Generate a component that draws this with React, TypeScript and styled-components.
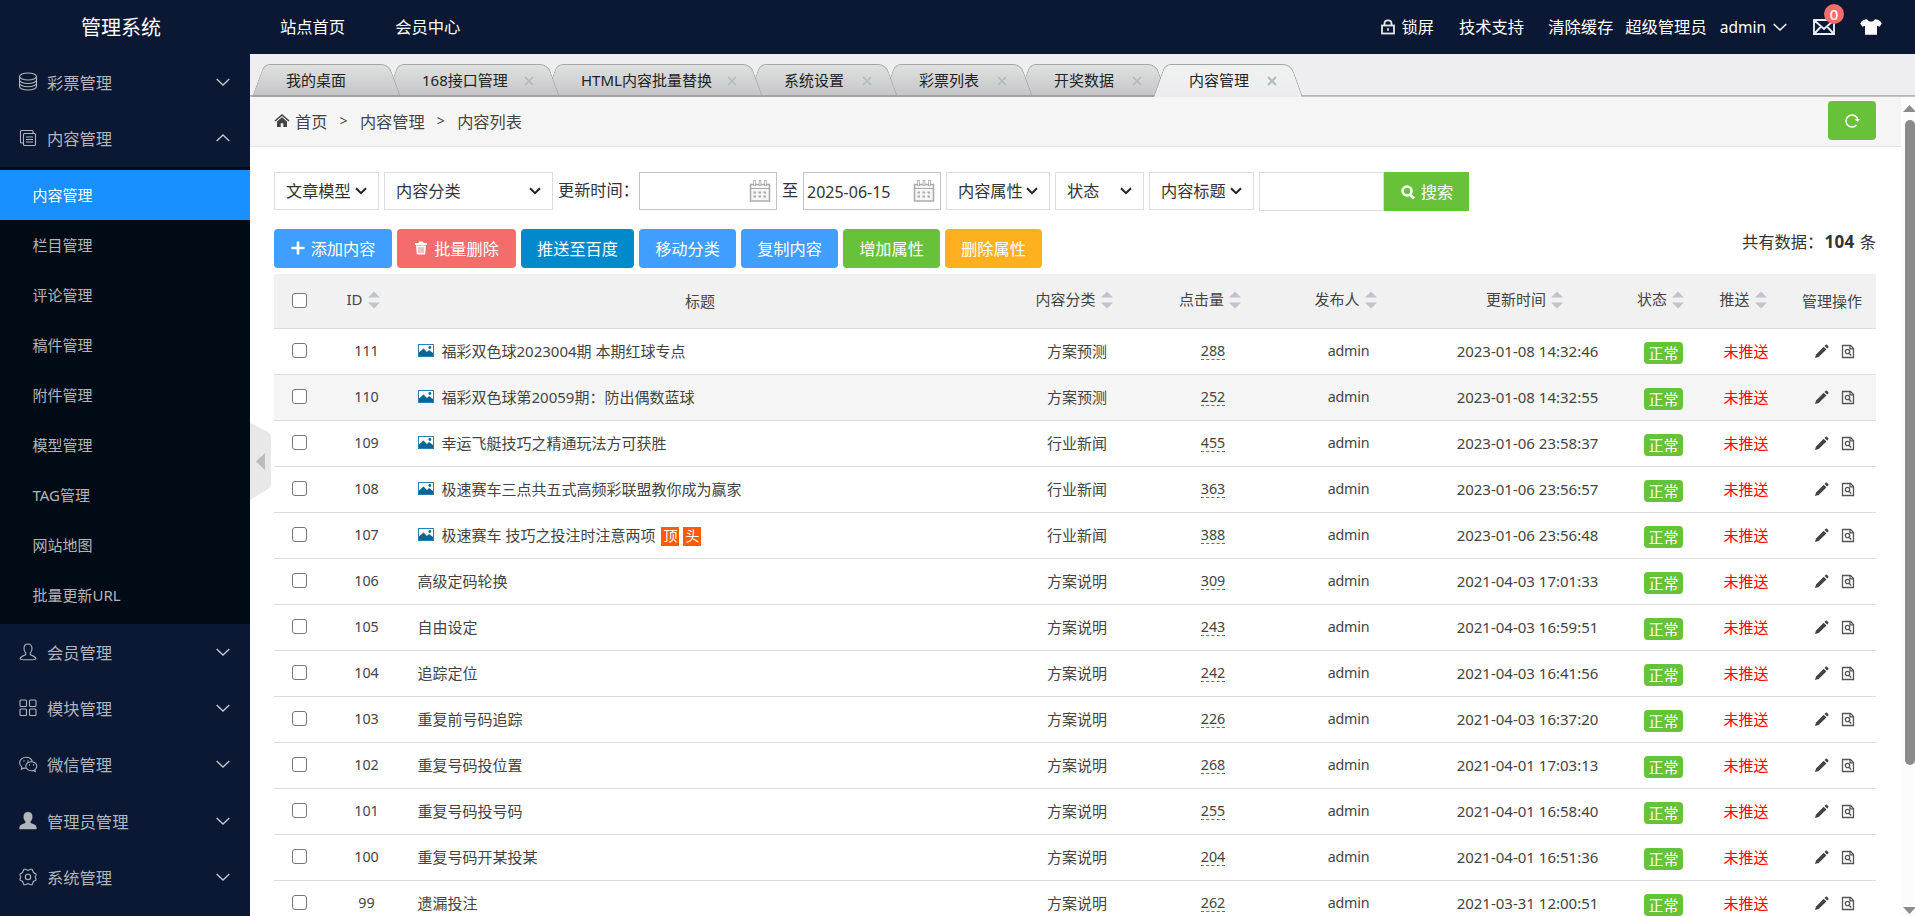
import React from 'react';
import styled, { createGlobalStyle, css } from 'styled-components';

const GlobalStyle = createGlobalStyle`
  * { box-sizing: border-box; }
  html, body { margin: 0; padding: 0; height: 100%; overflow: hidden; }
  body {
    font-family: 'Noto Sans', 'Noto Sans CJK SC', sans-serif;
    font-size: 15px;
    color: #444;
    background: #fff;
  }
`;

const Page = styled.div`
  height: 916px;
  display: flex;
  flex-direction: column;
  overflow: hidden;
`;

/* ---------- header ---------- */
const Header = styled.header`
  height: 54px;
  flex: none;
  display: flex;
  align-items: center;
  background: #0a1833;
  color: #fff;
  font-size: 16.300px;
  line-height: 54px;
  white-space: nowrap;
`;
const Brand = styled.div`
  width: 280px;
  padding-left: 81px;
  padding-top: 1px;
  font-size: 20px;
`;
const TopNav = styled.nav`
  display: flex;
  gap: 50px;
`;
const TopTools = styled.div`
  margin-left: auto;
  display: flex;
  align-items: center;
  padding-right: 33px;
`;
const Tool = styled.div<{ $gap: number }>`
  display: flex;
  align-items: center;
  margin-left: ${(p) => p.$gap}px;
  position: relative;
  svg { display: block; }
`;
const LockText = styled.span`
  margin-left: 6px;
`;
const UserName = styled.span`
  font-size: 15.500px;
`;
const Badge = styled.span`
  position: absolute;
  left: 11px;
  top: -15px;
  width: 20px;
  height: 20px;
  border-radius: 10px;
  background: #f56c6c;
  font-size: 15px;
  font-weight: 500;
  line-height: 20px;
  text-align: center;
`;

/* ---------- side menu ---------- */
const Body = styled.div`
  flex: 1;
  display: flex;
  min-height: 0;
`;
const Side = styled.aside`
  width: 250px;
  flex: none;
  background: #0a1833;
  color: #b2b5bb;
`;
const Group = styled.div`
  height: 56.33px;
  display: flex;
  align-items: center;
  padding: 0 20px 1px 17px;
  font-size: 16.300px;
  svg { display: block; flex: none; }
`;
const GroupName = styled.span`
  flex: 1;
  margin-left: 8px;
`;
const SubMenu = styled.div`
  background: #000b15;
  padding: 3.3px 0 4px;
`;
const SubItem = styled.div<{ $active?: boolean }>`
  height: 50px;
  line-height: 50px;
  padding-left: 32.500px;
  color: ${(p) => (p.$active ? '#fff' : '#b2b5b9')};
  background: ${(p) => (p.$active ? '#1890ff' : 'transparent')};
`;

/* ---------- main ---------- */
const Main = styled.main`
  flex: 1;
  min-width: 0;
  display: flex;
  flex-direction: column;
  position: relative;
`;
const TabBar = styled.div`
  height: 43px;
  flex: none;
  padding: 10px 0 0 2px;
  display: flex;
  background: #eeeef0;
  box-shadow: inset 0 -1px 0 #c4c4c6, inset 0 -2px 0 #b3b5b6;
`;
const tabFace = css<{ $active?: boolean }>`
  content: '';
  position: absolute;
  top: 0;
  bottom: 0;
  border: 1px solid #a6a6a6;
  background: ${(p) =>
    p.$active ? 'linear-gradient(#f0f2f1, #ececee)' : 'linear-gradient(#dfe1e0, #c6c6c8)'};
  z-index: -1;
`;
const Tab = styled.div<{ $width: number; $order: number; $active?: boolean }>`
  position: relative;
  z-index: ${(p) => p.$order};
  isolation: isolate;
  flex: none;
  width: ${(p) => p.$width}px;
  height: 33px;
  padding: 0 23px 2px 36px;
  &:first-child { padding-left: 34px; }
  display: flex;
  align-items: center;
  justify-content: space-between;
  color: #222;
  white-space: nowrap;
  & + & { margin-left: -15px; }
  &::before {
    ${tabFace}
    left: 6px;
    width: calc(60% - 6px);
    border-right: 0;
    border-top-left-radius: 6px;
    transform: skewX(-20deg);
    border-bottom: ${(p) => (p.$active ? 0 : '2px solid #a3a3a4')};
  }
  &::after {
    ${tabFace}
    right: 6px;
    width: calc(60% - 6px);
    border-left: 0;
    border-top-right-radius: 8px;
    transform: skewX(20deg);
    border-bottom: ${(p) => (p.$active ? 0 : '2px solid #a3a3a4')};
  }
`;
const TabClose = styled.svg`
  display: block;
  margin-top: 2px;
`;
const Content = styled.div`
  flex: 1;
  min-height: 0;
  display: flex;
`;
const Frame = styled.div`
  flex: 1;
  min-width: 0;
  overflow: hidden;
`;
const Crumbs = styled.div`
  height: 50px;
  display: flex;
  align-items: center;
  padding: 0 25px 2px 24px;
  background: #f5f5f5;
  border-bottom: 1px solid #e4e4e4;
  font-size: 16.200px;
  svg { display: block; }
`;
const CrumbHome = styled.span`
  margin-left: 5px;
`;
const CrumbSep = styled.span`
  width: 32.500px;
  text-align: center;
  font-size: 14px;
`;
const Refresh = styled.button`
  margin-left: auto;
  width: 48px;
  height: 39px;
  border: 0;
  border-radius: 4px;
  background: #67c23a;
  display: flex;
  align-items: center;
  justify-content: center;
`;
const ScrollBar = styled.div`
  width: 14px;
  flex: none;
  background: #fcfcfc;
  display: flex;
  flex-direction: column;
  align-items: flex-end;
  padding: 8px 0 2px;
  overflow: hidden;
`;
const ScrollThumb = styled.div`
  width: 10px;
  height: 645px;
  margin: 8px 0 auto;
  border-radius: 5px;
  background: #8b8b8b;
`;
const Handle = styled.svg`
  position: absolute;
  left: 0;
  top: 369px;
`;

const Filters = styled.form`
  display: flex;
  align-items: flex-start;
  height: 57px;
  margin: 25px 0 0 24px;
  font-size: 16.200px;
  line-height: 37px;
  white-space: nowrap;
`;
const Field = styled.div<{ $width: number; $gap?: number; $strong?: boolean; $tall?: boolean }>`
  width: ${(p) => p.$width}px;
  height: ${(p) => (p.$tall ? 39 : 38)}px;
  margin-right: ${(p) => p.$gap ?? 5}px;
  border: 1px solid ${(p) => (p.$strong ? '#c2c2c2' : '#ddd')};
  padding: 0 ${(p) => (p.$strong ? '5px 0 3px' : '11px')};
  display: flex;
  align-items: center;
  justify-content: space-between;
  color: #333;
  svg { flex: none; }
`;
const DateText = styled.span`
  padding-top: 2px;
  font-size: 16px;
`;
const FilterText = styled.span<{ $width: number }>`
  width: ${(p) => p.$width}px;
  flex: none;
  color: #333;
`;
const SearchButton = styled.button`
  width: 85px;
  height: 39px;
  border: 0;
  background: #67c23a;
  color: #fff;
  font: inherit;
  display: flex;
  align-items: center;
  justify-content: center;
  gap: 6px;
  padding: 1px 0 0 1px;
`;
const Actions = styled.div`
  display: flex;
  gap: 5px;
  height: 45px;
  margin: 0 25px 0 24px;
`;
const Action = styled.button<{ $color: string; $width: number }>`
  width: ${(p) => p.$width}px;
  height: 39px;
  padding: 0 0 2px;
  border: 0;
  border-radius: 4px;
  background: ${(p) => p.$color};
  color: #fff;
  font: inherit;
  font-size: 16.200px;
  display: flex;
  align-items: center;
  justify-content: center;
  gap: 6px;
`;
const Total = styled.div`
  margin-left: auto;
  font-size: 16.300px;
  line-height: 26px;
  color: #333;
  b {
    margin: 0 1px;
    font-size: 17px;
    letter-spacing: 0.300px;
  }
`;

/* ---------- table ---------- */
const columns = '51px 82px 586px 168px 104px 167px 191px 81px 84px 88px';
const Table = styled.div`
  width: 1602px;
  margin-left: 24px;
`;
const HeadRow = styled.div`
  display: grid;
  grid-template-columns: ${columns};
  height: 55px;
  align-items: center;
  justify-items: center;
  background: #f1f1f1;
  border-bottom: 1px solid #ddd;
  padding-bottom: 1px;
`;
const HeadCell = styled.div<{ $sort?: boolean }>`
  display: flex;
  align-items: center;
  gap: 5px;
  ${(p) => (p.$sort ? 'padding-right: 6px; padding-bottom: 4px;' : '')}
  svg { margin-top: 3px; }
`;
const Row = styled.div<{ $tint?: boolean }>`
  display: grid;
  grid-template-columns: ${columns};
  height: 46px;
  padding-bottom: 2px;
  align-items: center;
  justify-items: center;
  border-bottom: 1px solid #ddd;
  background: ${(p) => (p.$tint ? '#f5f5f5' : '#fff')};
  white-space: nowrap;
`;
const Check = styled.input.attrs({ type: 'checkbox' })`
  appearance: none;
  width: 15px;
  height: 15px;
  margin: 0 0 1px;
  border: 1px solid #767676;
  border-radius: 3px;
  background: #fff;
`;
const Num = styled.span`
  font-size: 14.3px;
  padding-left: 1px;
`;
const Title = styled.div`
  justify-self: start;
  padding-left: 10.500px;
  display: flex;
  align-items: center;
`;
const Thumb = styled.svg`
  margin-right: 8px;
`;
const Mark = styled.span`
  height: 19px;
  width: 18px;
  margin: 3px 0 0 4px;
  background: #ff5b00;
  color: #fff;
  font-size: 14px;
  line-height: 18px;
  text-align: center;
  &:first-of-type { margin-left: 6px; }
`;
const Hits = styled.span`
  font-size: 14.3px;
  line-height: 17px;
  border-bottom: 1px dashed #08c;
`;
const Author = styled.span`
  font-size: 14.300px;
  letter-spacing: -0.200px;
`;
const Status = styled.span`
  width: 39px;
  height: 22px;
  margin-top: 5px;
  border-radius: 4px;
  background: #67c23a;
  color: #fff;
  line-height: 22px;
  text-align: center;
`;
const Push = styled.span`
  color: #f00;
`;
const Ops = styled.div`
  display: flex;
  gap: 12px;
  padding-left: 5px;
  margin-top: 2px;
`;

/* ---------- icons ---------- */
const Chevron = ({ up = false, color = '#c3c6cc' }) => (
  <svg width="14" height="8" viewBox="0 0 14 8" fill="none" stroke={color} strokeWidth="1.4">
    <path d={up ? 'M.7 7 7 1l6.300 6' : 'M.7 1 7 7l6.300-6'} />
  </svg>
);
const SelectArrow = () => (
  <svg width="12" height="8" viewBox="0 0 12 8" fill="none" stroke="#222" strokeWidth="2">
    <path d="M1 1.200 6 6.200l5-5" />
  </svg>
);
const menuIcons: Record<string, React.ReactNode> = {
  db: (
    <>
      <ellipse cx="11" cy="5.500" rx="8.500" ry="3.500" />
      <path d="M2.500 5.500v10c0 2 3.800 3.500 8.500 3.500s8.500-1.500 8.500-3.500v-10M2.500 9c0 2 3.800 3.500 8.500 3.500S19.500 11 19.500 9M2.500 12.300c0 2 3.800 3.500 8.500 3.500s8.500-1.500 8.500-3.500" />
    </>
  ),
  docs: (
    <>
      <path d="M6 16H4.500c-.6 0-1-.4-1-1V4.500c0-.6.4-1 1-1H15c.6 0 1 .4 1 1V6" />
      <rect x="6.500" y="6.500" width="12" height="12" rx="1" />
      <path d="M9 10h7M9 12.500h7M9 15h7" />
    </>
  ),
  user: (
    <path d="M11 3c-2.600 0-4 1.900-4 4.400 0 1.700.6 3.400 1.700 4.400v1.700c-.4 1.200-5.200 1.300-5.700 4.500 0 .7 2 .8 8 .8s8-.1 8-.8c-.5-3.200-5.300-3.300-5.700-4.500v-1.700c1.100-1 1.700-2.700 1.700-4.400C15 4.900 13.600 3 11 3z" />
  ),
  grid: (
    <>
      <rect x="3" y="3" width="6.500" height="6.500" rx="1" />
      <rect x="12.500" y="3" width="6.500" height="6.500" rx="1" />
      <rect x="3" y="12" width="6.500" height="6.500" rx="1" />
      <rect x="12.500" y="12" width="6.500" height="6.500" rx="1" />
    </>
  ),
  wechat: (
    <>
      <path d="M9 15.300c-.8 0-1.400-.1-2-.3l-2.600 1.300.6-2.200C3.500 13 2.600 11.500 2.600 9.800c0-3.100 2.900-5.500 6.400-5.500 3 0 5.600 1.800 6.300 4.200" />
      <path d="M19.800 13.200c0-2.500-2.500-4.500-5.500-4.500s-5.500 2-5.500 4.500 2.500 4.500 5.500 4.500c.7 0 1.300-.1 1.900-.3l2 1-.4-1.700c1.200-.8 2-2 2-3.500z" />
      <path d="M6.500 8h1M10.500 8h1M12 12h1M16 12h1" strokeWidth="1.600" />
    </>
  ),
  admin: (
    <path
      fill="#b2b5bb"
      stroke="none"
      d="M11 2C8 2 6.500 4 6.500 6.800c0 1.900.8 3.600 1.900 4.600v1.400c-.4 1.100-6.100 1-6.100 5.400 0 .6.400 1 1.200 1h15c.8 0 1.200-.4 1.200-1 0-4.400-5.700-4.300-6.100-5.400v-1.400c1.100-1 1.900-2.700 1.900-4.600C15.500 4 14 2 11 2z"
    />
  ),
  gear: (
    <>
      <path d="M7 3.200h1.500L11 4.500l2.500-1.300H15l1.500 3.300 2.500 1.500v1l-.8 2 .8 2v1l-2.500 1.500L15 18.800h-1.500L11 17.500l-2.500 1.300H7L5.500 15.500 3 14v-1l.8-2L3 9V8l2.500-1.500z" />
      <circle cx="11" cy="11" r="2.700" />
    </>
  ),
};
const MenuIcon = ({ name }: { name: string }) => (
  <svg width="22" height="22" viewBox="0 0 22 22" fill="none" stroke="#b2b5bb" strokeWidth="1.100">
    {menuIcons[name]}
  </svg>
);
const Calendar = () => (
  <svg width="22" height="24" viewBox="0 0 22 24" fill="none" stroke="#aaa">
    <rect x="1.500" y="5.500" width="19" height="16.500" fill="#f6f6f6" strokeWidth="1.500" />
    <path d="M1 9.500h20" />
    <path d="M5.500 1v6M11 1v6M16.500 1v6" strokeWidth="2.600" />
    <path d="M5.500 1.800v4.500M11 1.800v4.500M16.500 1.800v4.500" stroke="#fff" />
    <path d="M4.500 13.500h13M4.500 17.500h13" strokeWidth="2" strokeDasharray="2.500 2.500" />
  </svg>
);
const SortArrows = () => (
  <svg width="12" height="18" viewBox="0 0 12 18" fill="#c0c4cc">
    <path d="M6 0.500l6 6H0zM6 17.500l6-6H0z" />
  </svg>
);
const ImageIcon = () => (
  <Thumb width="16" height="13" viewBox="0 0 16 13">
    <rect x=".5" y=".5" width="15" height="12" fill="#fff" stroke="#2a7fae" />
    <path d="M1 12V8.500l4.500-4 3.500 3.500 2-2L15 9v3z" fill="#0a6496" />
    <circle cx="11.800" cy="3.500" r="1.400" fill="#0a6496" />
  </Thumb>
);
const Pencil = () => (
  <svg width="15" height="15" viewBox="0 0 15 15" fill="#444">
    <path d="M1 14l1-3.600 7.700-7.700 2.700 2.700L4.700 13zM10.500 1.900l1-1c.5-.5 1.100-.4 1.600 0l1.100 1.100c.5.500.5 1.100 0 1.600l-1 1z" />
  </svg>
);
const DocSearch = () => (
  <svg width="14" height="15" viewBox="0 0 14 15" fill="none" stroke="#555" strokeWidth="1.300">
    <path d="M1.500 1.500h8l3 3v9h-11z" />
    <path d="M9 1.500v3.300h3.500" />
    <circle cx="6.500" cy="7.500" r="2.200" />
    <path d="M8 9.200l2.200 2.300" />
  </svg>
);

/* ---------- data ---------- */
const subItems = ['内容管理', '栏目管理', '评论管理', '稿件管理', '附件管理', '模型管理', 'TAG管理', '网站地图', '批量更新URL'];
const lowerGroups = [
  ['user', '会员管理'],
  ['grid', '模块管理'],
  ['wechat', '微信管理'],
  ['admin', '管理员管理'],
  ['gear', '系统管理'],
];
const tabs: [string, number][] = [
  ['我的桌面', 149],
  ['168接口管理', 174],
  ['HTML内容批量替换', 218],
  ['系统设置', 150],
  ['彩票列表', 150],
  ['开奖数据', 150],
  ['内容管理', 150],
];
type Item = { id: number; title: string; kind: string; hits: number; time: string; image?: boolean; marks?: string[] };
const items: Item[] = [
  { id: 111, title: '福彩双色球2023004期 本期红球专点', kind: '方案预测', hits: 288, time: '2023-01-08 14:32:46', image: true },
  { id: 110, title: '福彩双色球第20059期：防出偶数蓝球', kind: '方案预测', hits: 252, time: '2023-01-08 14:32:55', image: true },
  { id: 109, title: '幸运飞艇技巧之精通玩法方可获胜', kind: '行业新闻', hits: 455, time: '2023-01-06 23:58:37', image: true },
  { id: 108, title: '极速赛车三点共五式高频彩联盟教你成为赢家', kind: '行业新闻', hits: 363, time: '2023-01-06 23:56:57', image: true },
  { id: 107, title: '极速赛车 技巧之投注时注意两项', kind: '行业新闻', hits: 388, time: '2023-01-06 23:56:48', image: true, marks: ['顶', '头'] },
  { id: 106, title: '高级定码轮换', kind: '方案说明', hits: 309, time: '2021-04-03 17:01:33' },
  { id: 105, title: '自由设定', kind: '方案说明', hits: 243, time: '2021-04-03 16:59:51' },
  { id: 104, title: '追踪定位', kind: '方案说明', hits: 242, time: '2021-04-03 16:41:56' },
  { id: 103, title: '重复前号码追踪', kind: '方案说明', hits: 226, time: '2021-04-03 16:37:20' },
  { id: 102, title: '重复号码投位置', kind: '方案说明', hits: 268, time: '2021-04-01 17:03:13' },
  { id: 101, title: '重复号码投号码', kind: '方案说明', hits: 255, time: '2021-04-01 16:58:40' },
  { id: 100, title: '重复号码开某投某', kind: '方案说明', hits: 204, time: '2021-04-01 16:51:36' },
  { id: 99, title: '遗漏投注', kind: '方案说明', hits: 262, time: '2021-03-31 12:00:51' },
];
const heads: [string, boolean][] = [
  ['ID', true],
  ['标题', false],
  ['内容分类', true],
  ['点击量', true],
  ['发布人', true],
  ['更新时间', true],
  ['状态', true],
  ['推送', true],
  ['管理操作', false],
];

const Select = ({ label, width }: { label: string; width: number }) => (
  <Field $width={width}>
    {label}
    <SelectArrow />
  </Field>
);

export default function App() {
  return (
    <Page lang="zh-CN">
      <GlobalStyle />
      <Header>
        <Brand>管理系统</Brand>
        <TopNav>
          <span>站点首页</span>
          <span>会员中心</span>
        </TopNav>
        <TopTools>
          <Tool $gap={0}>
            <svg width="14" height="16" viewBox="0 0 14 16" fill="none" stroke="#e6e8ec" strokeWidth="1.800">
              <rect x="1" y="6.500" width="12" height="8" />
              <path d="M3.500 6.500V4.600C3.500 2.700 5 1.300 7 1.300s3.500 1.400 3.500 3.300v1.900M7 9.300v2.400" />
            </svg>
            <LockText>锁屏</LockText>
          </Tool>
          <Tool $gap={25}>技术支持</Tool>
          <Tool $gap={24}>清除缓存</Tool>
          <Tool $gap={12}>超级管理员</Tool>
          <Tool $gap={13}>
            <UserName>admin</UserName>
          </Tool>
          <Tool $gap={7}>
            <Chevron color="#fff" />
          </Tool>
          <Tool $gap={26}>
            <svg width="22" height="16" viewBox="0 0 22 16" fill="none" stroke="#e8eaee" strokeWidth="1.900">
              <path d="M1 1h20v14H1zM1.500 1.500 11 10l9.500-8.500M1.500 14.500l6.500-7M20.500 14.500l-6.500-7" />
            </svg>
            <Badge>0</Badge>
          </Tool>
          <Tool $gap={25}>
            <svg width="22" height="16" viewBox="0 0 22 16" fill="#fff">
              <path d="M7 .3C8 2 9.300 2.600 11 2.600S14 2 15 .3c2.500.2 5.500 1.200 6.700 4.200l-2 3.200-2.700-1v9H5v-9l-2.700 1-2-3.200C1.500 1.500 4.500.5 7 .3z" />
            </svg>
          </Tool>
        </TopTools>
      </Header>
      <Body>
        <Side>
          <Group>
            <MenuIcon name="db" />
            <GroupName>彩票管理</GroupName>
            <Chevron />
          </Group>
          <Group>
            <MenuIcon name="docs" />
            <GroupName>内容管理</GroupName>
            <Chevron up />
          </Group>
          <SubMenu>
            {subItems.map((s, i) => (
              <SubItem key={s} $active={i === 0}>
                {s}
              </SubItem>
            ))}
          </SubMenu>
          {lowerGroups.map(([icon, name]) => (
            <Group key={name}>
              <MenuIcon name={icon} />
              <GroupName>{name}</GroupName>
              <Chevron />
            </Group>
          ))}
        </Side>
        <Main>
          <TabBar>
            {tabs.map(([name, width], i) => (
              <Tab key={name} $width={width} $order={i === 6 ? 20 : 10 - i} $active={i === 6}>
                {name}
                {i > 0 && (
                  <TabClose width="16" height="10" viewBox="0 0 16 10" fill="none" stroke="#b4b9c0" strokeWidth={i === 6 ? 2.2 : 1.6}>
                    <path d="M4 1l8 8M12 1L4 9" />
                  </TabClose>
                )}
              </Tab>
            ))}
          </TabBar>
          <Content>
            <Frame>
              <Crumbs>
                <svg width="16" height="13" viewBox="0 0 16 13" fill="#444">
                  <path d="M8 0 .5 6.500l1 1L8 2l6.500 5.500 1-1zM8 3.300 3 7.500V13h3.700V9.300h2.600V13H13V7.500z" />
                </svg>
                <CrumbHome>首页</CrumbHome>
                <CrumbSep>&gt;</CrumbSep>
                <span>内容管理</span>
                <CrumbSep>&gt;</CrumbSep>
                <span>内容列表</span>
                <Refresh type="button">
                  <svg width="16" height="16" viewBox="0 0 16 16" fill="none" stroke="#fff" strokeWidth="1.600">
                    <path d="M12.500 12a6 6 0 1 1 1.400-5" />
                    <path d="M10.500 6.200h5.300L13.800 9z" fill="#fff" stroke="none" />
                  </svg>
                </Refresh>
              </Crumbs>
              <Filters>
                <Select label="文章模型" width={105} />
                <Select label="内容分类" width={169} />
                <FilterText $width={81}>更新时间：</FilterText>
                <Field $width={138} $strong>
                  <span />
                  <Calendar />
                </Field>
                <FilterText $width={21}>至</FilterText>
                <Field $width={138} $strong>
                  <DateText>2025-06-15</DateText>
                  <Calendar />
                </Field>
                <Select label="内容属性" width={104} />
                <Select label="状态" width={89} />
                <Select label="内容标题" width={105} />
                <Field $width={125} $gap={0} $tall />
                <SearchButton type="button">
                  <svg width="14" height="15" viewBox="0 0 14 15" fill="none" stroke="#fff" strokeWidth="2.600">
                    <circle cx="6" cy="6" r="4.500" />
                    <path d="M9 9.500l4 4" strokeWidth="3" />
                  </svg>
                  搜索
                </SearchButton>
              </Filters>
              <Actions>
                <Action $color="#409eff" $width={118}>
                  <svg width="14" height="14" viewBox="0 0 14 14" stroke="#fff" strokeWidth="2.600">
                    <path d="M7 .5v13M.5 7h13" />
                  </svg>
                  添加内容
                </Action>
                <Action $color="#f56c6c" $width={119}>
                  <svg width="14" height="14" viewBox="0 0 14 14" fill="#fff">
                    <path d="M1 2h3.500L5 .5h4L9.500 2H13v2H1zM2 4.500h10l-.8 9H2.800z" />
                    <path d="M5 6v6M7 6v6M9 6v6" stroke="#f56c6c" strokeWidth=".9" />
                  </svg>
                  批量删除
                </Action>
                <Action $color="#008acb" $width={113}>推送至百度</Action>
                <Action $color="#409eff" $width={97}>移动分类</Action>
                <Action $color="#409eff" $width={97}>复制内容</Action>
                <Action $color="#67c23a" $width={97}>增加属性</Action>
                <Action $color="#ffb01e" $width={97}>删除属性</Action>
                <Total>
                  共有数据：<b>104</b> 条
                </Total>
              </Actions>
              <Table>
                <HeadRow>
                  <Check />
                  {heads.map(([name, sort]) => (
                    <HeadCell key={name} $sort={sort}>
                      {name}
                      {sort && <SortArrows />}
                    </HeadCell>
                  ))}
                </HeadRow>
                {items.map((it, i) => (
                  <Row key={it.id} $tint={i === 1}>
                    <Check />
                    <Num>{it.id}</Num>
                    <Title>
                      {it.image && <ImageIcon />}
                      {it.title}
                      {it.marks?.map((m) => (
                        <Mark key={m}>{m}</Mark>
                      ))}
                    </Title>
                    <span>{it.kind}</span>
                    <Hits>{it.hits}</Hits>
                    <Author>admin</Author>
                    <span>{it.time}</span>
                    <Status>正常</Status>
                    <Push>未推送</Push>
                    <Ops>
                      <Pencil />
                      <DocSearch />
                    </Ops>
                  </Row>
                ))}
              </Table>
            </Frame>
            <ScrollBar>
              <svg width="12" height="7" viewBox="0 0 12 7" fill="#8b8b8b">
                <path d="M6.500 0l6.500 7H0z" />
              </svg>
              <ScrollThumb />
              <svg width="12" height="7" viewBox="0 0 12 7" fill="#8b8b8b">
                <path d="M6.500 7L13 0H0z" />
              </svg>
            </ScrollBar>
          </Content>
          <Handle width="21" height="77" viewBox="0 0 21 77">
            <path d="M0 0l18 9q3 2 3 5v47q0 3-3 5L0 77z" fill="#e8e8e8" />
            <path d="M15 30v17l-9-8.500z" fill="#bcbcbc" />
          </Handle>
        </Main>
      </Body>
    </Page>
  );
}
